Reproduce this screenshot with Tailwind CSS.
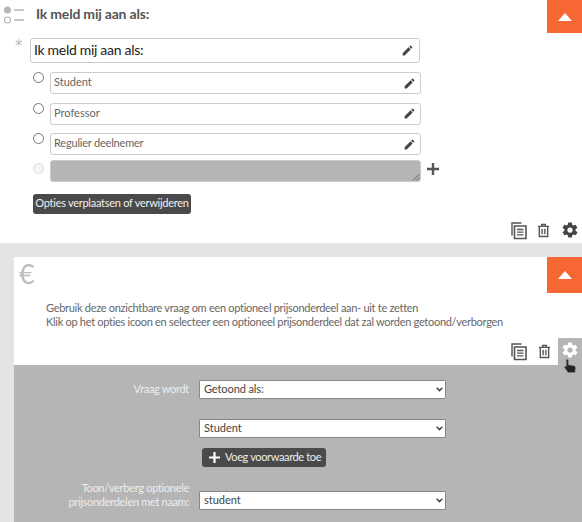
<!DOCTYPE html>
<html lang="nl">
<head>
    <meta charset="UTF-8" />
    <meta name="viewport" content="width=device-width, initial-scale=1" />
    <title>Vragen</title>
    <script src="https://cdn.jsdelivr.net/npm/@tailwindcss/browser@4"></script>
</head>
<body class="bg-white font-['Lato',sans-serif] overflow-hidden">
<div class="w-[582px] h-[522px] overflow-hidden bg-[#e4e4e4]">

    <!-- vraag 1 -->
    <div class="bg-white h-[243px] relative">
        <div class="flex h-[38px]">
            <svg class="w-[22px] h-[18px] ml-[3px] mt-[6px]" viewBox="0 0 22 18" fill="none">
                <circle cx="4.5" cy="4" r="3.5" fill="#b5b5b5"/>
                <circle cx="4.5" cy="14" r="3" stroke="#b5b5b5" stroke-width="1.2"/>
                <path d="M11 4h10M11 14h10" stroke="#b5b5b5" stroke-width="1.6"/>
            </svg>
            <div class="ml-[11px] mt-[5px] text-[14px] leading-[18px] font-bold text-[#555] tracking-[-0.2px]">Ik meld mij aan als:</div>
            <button class="ml-auto w-[35px] h-[33px] bg-[#f76734] flex items-center justify-center">
                <svg class="w-[14px] h-[8px]" viewBox="0 0 14 8"><path d="M7 0l7 8H0z" fill="#fff"/></svg>
            </button>
        </div>

        <div class="flex">
            <div class="w-[30px] pl-[15px] text-[15px] leading-[16px] text-[#bbb] font-['DejaVu_Sans',sans-serif]">*</div>
            <div class="w-[390px] h-[25px] border border-[#ccc] rounded-[3px] flex items-center justify-between pl-[3px] pr-[5px]">
                <span class="text-[14px] leading-[20px] pb-[2px] text-[#222] tracking-[-0.3px]">Ik meld mij aan als:</span>
                <svg class="w-[13px] h-[13px]" viewBox="0 0 24 24"><path d="M3 17.25V21h3.75L17.81 9.94l-3.75-3.75zM20.71 7.04a1 1 0 0 0 0-1.41l-2.34-2.34a1 1 0 0 0-1.41 0l-1.83 1.83 3.75 3.75z" fill="#444"/></svg>
            </div>
        </div>

        <div class="flex mt-[9px] h-[30.5px]">
            <div class="w-[50px] pl-[33px]"><span class="block w-[11px] h-[11px] rounded-full border border-[#777] bg-white"></span></div>
            <div class="w-[371px] h-[22px] border border-[#ccc] rounded-[3px] flex items-center justify-between pl-[3px] pr-[4px]">
                <span class="text-[11px] leading-[14px] pb-[2px] text-[#666]">Student</span>
                <svg class="w-[13px] h-[13px]" viewBox="0 0 24 24"><path d="M3 17.25V21h3.75L17.81 9.94l-3.75-3.75zM20.71 7.04a1 1 0 0 0 0-1.41l-2.34-2.34a1 1 0 0 0-1.41 0l-1.83 1.83 3.75 3.75z" fill="#444"/></svg>
            </div>
        </div>
        <div class="flex h-[30.5px]">
            <div class="w-[50px] pl-[33px]"><span class="block w-[11px] h-[11px] rounded-full border border-[#777] bg-white"></span></div>
            <div class="w-[371px] h-[22px] border border-[#ccc] rounded-[3px] flex items-center justify-between pl-[3px] pr-[4px]">
                <span class="text-[11px] leading-[14px] pb-[2px] text-[#666]">Professor</span>
                <svg class="w-[13px] h-[13px]" viewBox="0 0 24 24"><path d="M3 17.25V21h3.75L17.81 9.94l-3.75-3.75zM20.71 7.04a1 1 0 0 0 0-1.41l-2.34-2.34a1 1 0 0 0-1.41 0l-1.83 1.83 3.75 3.75z" fill="#444"/></svg>
            </div>
        </div>
        <div class="flex h-[26.5px]">
            <div class="w-[50px] pl-[33px]"><span class="block w-[11px] h-[11px] rounded-full border border-[#777] bg-white"></span></div>
            <div class="w-[371px] h-[22px] border border-[#ccc] rounded-[3px] flex items-center justify-between pl-[3px] pr-[4px]">
                <span class="text-[11px] leading-[14px] pb-[2px] text-[#666] tracking-[-0.2px]">Regulier deelnemer</span>
                <svg class="w-[13px] h-[13px]" viewBox="0 0 24 24"><path d="M3 17.25V21h3.75L17.81 9.94l-3.75-3.75zM20.71 7.04a1 1 0 0 0 0-1.41l-2.34-2.34a1 1 0 0 0-1.41 0l-1.83 1.83 3.75 3.75z" fill="#444"/></svg>
            </div>
        </div>
        <div class="flex h-[22px]">
            <div class="w-[50px] pl-[33px] pt-[3px]"><span class="block w-[11px] h-[11px] rounded-full border border-[#ddd] bg-[#f4f4f4]"></span></div>
            <div class="w-[371px] h-[22px] bg-[#b5b5b5] border border-[#ccc] rounded-[3px] relative">
                <svg class="absolute right-0 bottom-0 w-[8px] h-[8px]" viewBox="0 0 8 8"><path d="M7.5 1L1 7.500M7.500 4.500L4.500 7.500" stroke="#666" stroke-width="1"/></svg>
            </div>
            <svg class="w-[12px] h-[12px] ml-[6px] mt-[3px]" viewBox="0 0 12 12"><path d="M6 0v12M0 6h12" stroke="#555" stroke-width="2.400"/></svg>
        </div>

        <div class="ml-[33px] mt-[12px] w-[158px] h-[20px] bg-[#4a4a4a] rounded-[3px] flex items-center justify-center whitespace-nowrap text-[11px] text-[#eee] tracking-[-0.27px]">Opties verplaatsen of verwijderen</div>

        <div class="flex justify-end items-center gap-[10px] pr-[3px] mt-[7px]">
            <svg class="w-[16px] h-[19px]" viewBox="0 0 16 18" fill="none" stroke="#555"><path d="M1 14V1.500h9.500" stroke-width="1.400"/><path d="M3.500 4.500h11.500v12.500H3.500z" stroke-width="1.600"/><path d="M6 8h6.500M6 10.700h6.500M6 13.400h6.500" stroke-width="1.300"/></svg>
            <svg class="w-[13px] h-[15px] mr-[1px]" viewBox="0 0 14 15" fill="none" stroke="#555" stroke-width="1.500"><path d="M1 3h12M5 3V1h4v2M2.500 3v11h9V3M5.500 5.500v6M8.500 5.500v6"/></svg>
            <svg class="w-[18px] h-[18px]" viewBox="0 0 24 24"><path d="M19.400 13a7.500 7.500 0 0 0 0-2l2.500-1.900-2.400-4.200-3 1.200a7.500 7.500 0 0 0-1.700-1L14.400 2H9.600l-.5 3.100a7.500 7.500 0 0 0-1.700 1l-3-1.200L2 9.100 4.600 11a7.500 7.500 0 0 0 0 2l-2.500 1.900 2.400 4.200 3-1.200a7.500 7.500 0 0 0 1.700 1l.5 3.100h4.800l.5-3.100a7.500 7.500 0 0 0 1.700-1l3 1.200 2.400-4.200zM12 15.500a3.500 3.500 0 1 1 0-7 3.500 3.500 0 0 1 0 7z" fill="#444"/></svg>
        </div>
    </div>

    <!-- vraag 2 -->
    <div class="ml-[14px] mt-[14px] h-[265px] bg-[#b5b5b5]">
        <div class="bg-white h-[108px] relative">
            <div class="flex h-[44px]">
                <div class="ml-[5px] mt-[2px] text-[27px] leading-[30px] text-[#bbb]">€</div>
                <button class="ml-auto w-[35px] h-[36px] bg-[#f76734] flex items-center justify-center">
                    <svg class="w-[14px] h-[8px]" viewBox="0 0 14 8"><path d="M7 0l7 8H0z" fill="#fff"/></svg>
                </button>
            </div>
            <p class="ml-[32px] text-[11px] leading-[14px] text-[#666] tracking-[-0.29px] whitespace-nowrap">Gebruik deze onzichtbare vraag om een optioneel prijsonderdeel aan- uit te zetten<br />Klik op het opties icoon en selecteer een optioneel prijsonderdeel dat zal worden getoond/verborgen</p>
            <div class="absolute right-0 bottom-0 flex items-center gap-[11px]">
                <svg class="w-[16px] h-[19px]" viewBox="0 0 16 18" fill="none" stroke="#555"><path d="M1 14V1.500h9.500" stroke-width="1.400"/><path d="M3.500 4.500h11.500v12.500H3.500z" stroke-width="1.600"/><path d="M6 8h6.500M6 10.700h6.500M6 13.400h6.500" stroke-width="1.300"/></svg>
                <svg class="w-[13px] h-[15px] -mr-[4px]" viewBox="0 0 14 15" fill="none" stroke="#555" stroke-width="1.500"><path d="M1 3h12M5 3V1h4v2M2.500 3v11h9V3M5.500 5.500v6M8.500 5.500v6"/></svg>
                <div class="w-[24px] h-[27px] bg-[#b5b5b5] flex items-center justify-center pb-[4px]">
                    <svg class="w-[18px] h-[18px]" viewBox="0 0 24 24"><path d="M19.400 13a7.500 7.500 0 0 0 0-2l2.500-1.900-2.400-4.200-3 1.200a7.500 7.500 0 0 0-1.700-1L14.400 2H9.600l-.5 3.100a7.500 7.500 0 0 0-1.700 1l-3-1.200L2 9.100 4.600 11a7.500 7.500 0 0 0 0 2l-2.500 1.900 2.400 4.200 3-1.200a7.500 7.500 0 0 0 1.700 1l.5 3.100h4.800l.5-3.100a7.500 7.500 0 0 0 1.700-1l3 1.200 2.400-4.200zM12 15.500a3.500 3.500 0 1 1 0-7 3.500 3.500 0 0 1 0 7z" fill="#fff"/></svg>
                </div>
            </div>
            <!-- muiscursor -->
            <svg class="absolute right-[5px] bottom-[-9px] w-[14px] h-[16px]" viewBox="0 0 14 16"><path d="M4 1.500c.8 0 1.300.5 1.300 1.300v4l5.500 1c1.200.3 1.700 1 1.700 2l-.5 4.700H5L1.500 9.500c-.5-.8.6-1.600 1.400-.9l.4.4V2.800C2.700 2 3.200 1.500 4 1.500z" fill="#222" stroke="#888" stroke-width=".6"/></svg>
        </div>

        <div class="flex mt-[15px] h-[19px]">
            <div class="w-[175px] text-right text-[11px] leading-[17px] text-[#eee] tracking-[-0.3px]">Vraag wordt</div>
            <div class="relative ml-[10px] w-[247px]">
                <select class="block appearance-none w-full h-[19px] bg-white border border-[#888] rounded-[1px] pl-[4px] text-[11px] text-[#444] tracking-[-0.1px]"><option>Getoond als:</option></select>
                <svg class="absolute right-[3px] top-[7px] w-[7px] h-[5px]" viewBox="0 0 7 5" fill="none"><path d="M.7.8l2.800 2.800L6.300.8" stroke="#444" stroke-width="1.500"/></svg>
            </div>
        </div>
        <div class="flex mt-[20px] h-[19px]">
            <div class="relative ml-[185px] w-[247px]">
                <select class="block appearance-none w-full h-[19px] bg-white border border-[#888] rounded-[1px] pl-[4px] text-[11px] text-[#444]"><option>Student</option></select>
                <svg class="absolute right-[3px] top-[7px] w-[7px] h-[5px]" viewBox="0 0 7 5" fill="none"><path d="M.7.8l2.800 2.800L6.300.8" stroke="#444" stroke-width="1.500"/></svg>
            </div>
        </div>
        <button class="flex items-center whitespace-nowrap ml-[188px] mt-[10px] w-[124px] h-[19px] bg-[#4a4a4a] rounded-[3px] pl-[7px] text-[11px] text-[#eee] tracking-[-0.36px]">
            <svg class="w-[11px] h-[11px] mr-[5px]" viewBox="0 0 12 12"><path d="M6 0v12M0 6h12" stroke="#fff" stroke-width="2.400"/></svg>
            Voeg voorwaarde toe
        </button>
        <div class="flex mt-[14px] items-end">
            <div class="w-[175px] mb-[1px] text-right text-[11px] leading-[14px] text-[#eee] tracking-[-0.3px] whitespace-nowrap">Toon/verberg optionele<br />prijsonderdelen met naam:</div>
            <div class="relative ml-[10px] w-[247px]">
                <select class="block appearance-none w-full h-[19px] bg-white border border-[#888] rounded-[1px] pl-[4px] text-[11px] text-[#444]"><option>student</option></select>
                <svg class="absolute right-[3px] top-[7px] w-[7px] h-[5px]" viewBox="0 0 7 5" fill="none"><path d="M.7.8l2.800 2.800L6.300.8" stroke="#444" stroke-width="1.500"/></svg>
            </div>
        </div>
    </div>
</div>
</body>
</html>
